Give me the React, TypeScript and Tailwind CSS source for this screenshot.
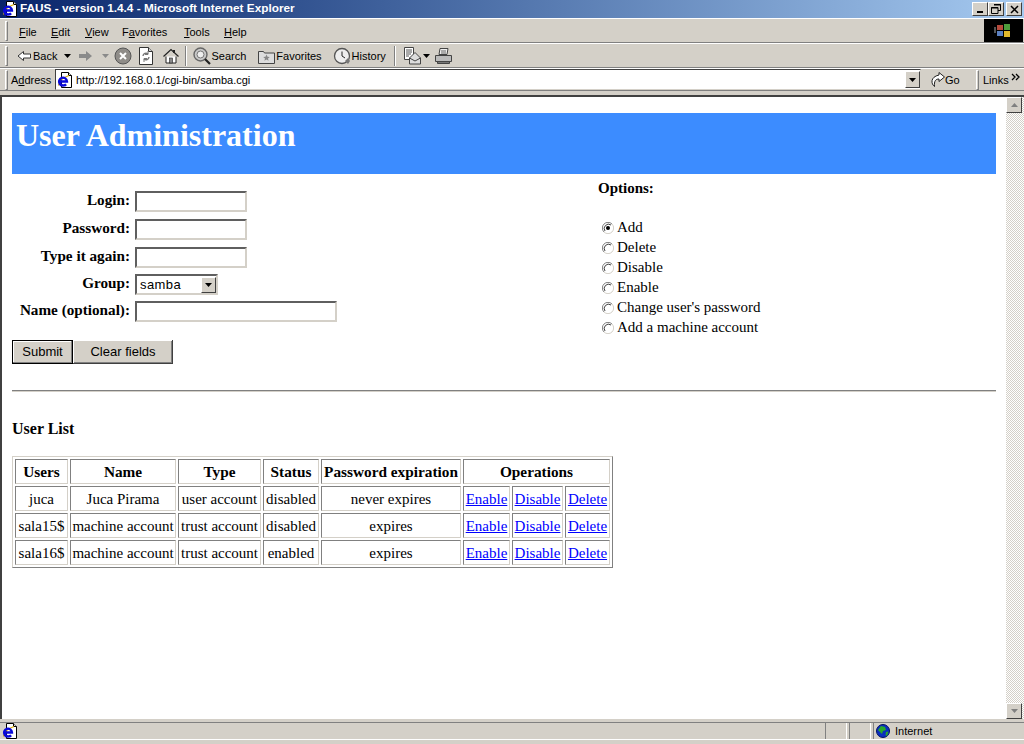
const ui = { fontFamily: '"Liberation Sans", Arial, sans-serif' }

function Gripper() {
  return <span className="mr-[6px] h-[20px] w-[3px] shrink-0 border-t border-l border-t-white border-l-white border-b border-r border-b-[#808080] border-r-[#808080]" />
}

function Divider() {
  return <span className="mx-[3px] block h-[20px] w-[2px] shrink-0 border-l border-r border-l-[#808080] border-r-white" />
}

function IeIcon() {
  return (
    <svg width="16" height="16" viewBox="0 0 16 16" className="shrink-0">
      <path d="M4.500 .5h7l3 3v12h-10z" fill="#fff" stroke="#000" />
      <path d="M11.500 .5v3h3" fill="#ddd" stroke="#000" />
      <path d="M1.500 13.500C2 9 6 5.500 12 3.500" fill="none" stroke="#d9a800" strokeWidth="1.300" />
      <path d="M2.500 9.500h7.500a4 4 0 1 0-1 2.800M2.500 9.500a4 4 0 0 0 6.500 3" fill="none" stroke="#0808d8" strokeWidth="2.300" />
    </svg>
  )
}

function TinyArrow({ color = "#000" }: { color?: string }) {
  return (
    <svg width="7" height="4" viewBox="0 0 7 4" className="block shrink-0">
      <path d="M0 0h7L3.500 4z" fill={color} />
    </svg>
  )
}

function BackIcon() {
  return (
    <svg width="16" height="14" viewBox="0 0 16 14" className="block">
      <path d="M7.500 2.500 2 7l5.500 4.500V9h7V5h-7z" fill="#fff" stroke="#333" />
    </svg>
  )
}

function ForwardIcon() {
  return (
    <svg width="16" height="14" viewBox="0 0 16 14" className="block">
      <path d="M8 2l6 5-6 5V9H1V5h7z" fill="#8a8a8a" />
    </svg>
  )
}

function StopIcon() {
  return (
    <svg width="18" height="18" viewBox="0 0 18 18" className="block">
      <circle cx="9" cy="9" r="8" fill="#8f8c88" stroke="#555" />
      <path d="M6 6l6 6M12 6l-6 6" stroke="#fff" strokeWidth="2" />
    </svg>
  )
}

function RefreshIcon() {
  return (
    <svg width="14" height="18" viewBox="0 0 14 18" className="block">
      <path d="M.5 .5h9l4 4v13H.5z" fill="#fff" stroke="#333" />
      <path d="M9.500 .5v4h4" fill="#ccc" stroke="#333" />
      <path d="M4 9a3 3 0 0 1 5-2M10 10a3 3 0 0 1-5 2" fill="none" stroke="#777" strokeWidth="1.400" />
      <path d="M9 4v3.500H6M5 15v-3.500h3" fill="none" stroke="#777" />
    </svg>
  )
}

function HomeIcon() {
  return (
    <svg width="16" height="16" viewBox="0 0 16 16" className="block">
      <path d="M3 8.500V15h10V8.500" fill="#fff" stroke="#222" />
      <path d="M.5 8.500 8 1.500l7.500 7" fill="none" stroke="#222" strokeWidth="1.200" />
      <path d="M11 2v3" stroke="#222" strokeWidth="2" />
      <rect x="6.500" y="10" width="3" height="5" fill="#8a8a8a" stroke="#222" strokeWidth=".6" />
    </svg>
  )
}

function SearchIcon() {
  return (
    <svg width="18" height="18" viewBox="0 0 18 18" className="block">
      <circle cx="7.500" cy="7.500" r="6.500" fill="#c9c9c9" stroke="#666" strokeWidth="1.400" />
      <circle cx="7.500" cy="7.500" r="3.500" fill="#eee" stroke="#777" />
      <path d="M12 12l5 5" stroke="#222" strokeWidth="2.200" />
    </svg>
  )
}

function FavoritesIcon() {
  return (
    <svg width="17" height="15" viewBox="0 0 17 15" className="block">
      <path d="M.5 2.500h5l1 1.500h10v10.500H.5z" fill="#ddd" stroke="#444" />
      <path d="M8.500 5.500l1 2.200 2.300.2-1.800 1.500.6 2.300-2.100-1.200-2.100 1.200.6-2.300-1.800-1.500 2.300-.2z" fill="#888" />
    </svg>
  )
}

function HistoryIcon() {
  return (
    <svg width="18" height="18" viewBox="0 0 18 18" className="block">
      <circle cx="9" cy="9" r="7.500" fill="#eee" stroke="#555" strokeWidth="1.300" />
      <path d="M9 4.500V9l3 2" fill="none" stroke="#222" />
      <path d="M12 14l3-3 2 3-2 3z" fill="#777" />
    </svg>
  )
}

function MailIcon() {
  return (
    <svg width="18" height="18" viewBox="0 0 18 18" className="block">
      <path d="M.5 .5h9v12h-9z" fill="#fff" stroke="#444" />
      <path d="M2 3h6M2 5h6M2 7h5M2 9h3" stroke="#555" />
      <path d="M5.500 11 11 5.500l5.500 5.500v6h-11z" fill="#ddd" stroke="#444" />
      <path d="M5.500 11l5.500 3 5.500-3" fill="none" stroke="#444" />
    </svg>
  )
}

function PrintIcon() {
  return (
    <svg width="17" height="16" viewBox="0 0 17 16" className="block">
      <path d="M5 .5h8l-1 6H4z" fill="#eee" stroke="#444" />
      <path d="M.5 7.500h16v6H.5z" fill="#bbb" stroke="#444" />
      <path d="M2.500 13.500h12v2h-12z" fill="#777" stroke="#444" />
      <path d="M6 3h5M6 5h5" stroke="#666" />
    </svg>
  )
}

function GoIcon() {
  return (
    <svg width="15" height="15" viewBox="0 0 15 15" className="block shrink-0">
      <path d="M9 .5l5.500 4.500L9 9.500V7C5.500 7 4 9 4.500 14.500 1 12 0 5 9 3z" fill="#fff" stroke="#222" />
    </svg>
  )
}

function GlobeIcon() {
  return (
    <svg width="14" height="14" viewBox="0 0 14 14" className="shrink-0">
      <circle cx="7" cy="7" r="6.500" fill="#0a2fc0" stroke="#001060" />
      <path d="M5 2l4 1 1 3-3 1-1 3-2-2-2-2zM10 8l2.500-.5L11 12l-1.500-1z" fill="#28a82c" />
    </svg>
  )
}

function WinFlag() {
  return (
    <svg width="20" height="16" viewBox="0 0 20 16">
      <rect x="3" y="2" width="6" height="5" fill="#b54a3c" />
      <rect x="10" y="1" width="6" height="6" fill="#4d9a3c" />
      <rect x="3" y="8" width="6" height="5" fill="#5a7fc0" />
      <rect x="10" y="8" width="6" height="6" fill="#e0b82c" />
      <rect x="0" y="4" width="2" height="6" fill="#555" />
    </svg>
  )
}

function CaptionButton({ children }: { children: React.ReactNode }) {
  return (
    <span className="flex h-[14px] w-[16px] items-center justify-center bg-[#d4d0c8] border-t border-l border-t-white border-l-white border-b border-r border-b-[#404040] border-r-[#404040]">
      {children}
    </span>
  )
}

function TitleBar() {
  return (
    <div className="flex h-[18px] shrink-0 items-center bg-gradient-to-r from-[#0a246a] to-[#a6caf0] pl-[2px] pr-[2px]">
      <IeIcon />
      <span className="ml-[2px] text-[11.800px] font-bold text-white">FAUS - version 1.4.4 - Microsoft Internet Explorer</span>
      <div className="ml-auto flex">
        <CaptionButton>
          <span className="mt-[6px] h-[2px] w-[6px] bg-black" />
        </CaptionButton>
        <CaptionButton>
          <svg width="10" height="10" viewBox="0 0 10 10">
            <path d="M3 .5h6.500v6H7M.5 3.500h6.500v6H.5z" fill="none" stroke="#000" />
            <path d="M3 1h7M0 4h7" stroke="#000" />
          </svg>
        </CaptionButton>
        <span className="ml-[2px]" />
        <CaptionButton>
          <svg width="9" height="9" viewBox="0 0 9 9">
            <path d="M1 1l7 7M8 1 1 8" stroke="#000" strokeWidth="1.500" />
          </svg>
        </CaptionButton>
      </div>
    </div>
  )
}

function MenuBar() {
  return (
    <div className="flex h-[25px] shrink-0 items-center border-t border-t-white border-b border-b-[#808080] pl-[5px] pr-[1px]">
      <Gripper />
      <div className="flex flex-1 pl-[5px] pt-[3px]">
        <span className="w-[32px]"><u>F</u>ile</span>
        <span className="w-[34px]"><u>E</u>dit</span>
        <span className="w-[37px]"><u>V</u>iew</span>
        <span className="w-[62px]">F<u>a</u>vorites</span>
        <span className="w-[40px]"><u>T</u>ools</span>
        <span><u>H</u>elp</span>
      </div>
      <div className="flex h-[23px] w-[39px] items-center justify-center bg-black">
        <WinFlag />
      </div>
    </div>
  )
}

function ToolBar() {
  return (
    <div className="flex h-[25px] shrink-0 items-center border-t border-t-white border-b border-b-[#808080] pl-[5px]">
      <Gripper />
      <div className="flex items-center pt-[1px]">
        <span className="ml-[2px]"><BackIcon /></span>
        <span className="ml-[1px]">Back</span>
        <span className="ml-[7px]"><TinyArrow /></span>
        <span className="ml-[7px]"><ForwardIcon /></span>
        <span className="ml-[8px]"><TinyArrow color="#8a8a8a" /></span>
        <span className="ml-[5px]"><StopIcon /></span>
        <span className="ml-[7px]"><RefreshIcon /></span>
        <span className="ml-[10px]"><HomeIcon /></span>
        <span className="ml-[3px]"><Divider /></span>
        <span className="ml-[3px]"><SearchIcon /></span>
        <span>Search</span>
        <span className="ml-[12px]"><FavoritesIcon /></span>
        <span className="ml-[1px]">Favorites</span>
        <span className="ml-[11px]"><HistoryIcon /></span>
        <span className="ml-[1px]">History</span>
        <span className="ml-[5px]"><Divider /></span>
        <span className="ml-[5px]"><MailIcon /></span>
        <span className="ml-[1px]"><TinyArrow /></span>
        <span className="ml-[5px]"><PrintIcon /></span>
      </div>
    </div>
  )
}

function AddressBar() {
  return (
    <div className="flex h-[23px] shrink-0 items-center border-t border-t-white border-b border-b-[#808080] pl-[5px] pr-[3px]">
      <Gripper />
      <span className="-ml-[3px] w-[44px] shrink-0 pt-[1px]">A<u>d</u>dress</span>
      <div className="flex h-[21px] flex-1 items-center border-t border-l border-t-[#404040] border-l-[#404040] border-b border-r border-b-[#d4d0c8] border-r-[#d4d0c8] bg-white pl-[1px]">
        <IeIcon />
        <span className="ml-[3px] pt-[2px]">http://192.168.0.1/cgi-bin/samba.cgi</span>
        <span className="ml-auto flex h-[17px] w-[15px] items-center justify-center bg-[#d4d0c8] border-t border-l border-t-white border-l-white border-b border-r border-b-[#404040] border-r-[#404040]">
          <TinyArrow />
        </span>
      </div>
      <div className="flex w-[55px] shrink-0 items-center pl-[9px]">
        <GoIcon />
        <span className="pt-[1px]">Go</span>
      </div>
      <Gripper />
      <span className="-ml-[2px] w-[28px] shrink-0 pt-[1px]">Links</span>
      <svg width="10" height="8" viewBox="0 0 10 8" className="-mt-[5px] shrink-0">
        <path d="M1 1l3 3-3 3M5 1l3 3-3 3" fill="none" stroke="#000" strokeWidth="1.300" />
      </svg>
    </div>
  )
}

function Radio({ checked }: { checked?: boolean }) {
  return (
    <svg width="12" height="12" viewBox="0 0 12 12" className="shrink-0">
      <circle cx="6" cy="6" r="5.500" fill="#fff" />
      <path d="M2 10A5.500 5.500 0 0 1 10 2" fill="none" stroke="#808080" />
      <path d="M10 2A5.500 5.500 0 0 1 2 10" fill="none" stroke="#d4d0c8" />
      <path d="M3 9A4.300 4.300 0 0 1 9 3" fill="none" stroke="#404040" />
      {checked && <circle cx="6" cy="6" r="2" fill="#000" />}
    </svg>
  )
}

function TextField({ width }: { width: string }) {
  return (
    <input
      type="text"
      className={`h-[21px] border-2 border-t-[#5f5f5f] border-l-[#5f5f5f] border-b-[#d4d0c8] border-r-[#d4d0c8] bg-white ${width}`}
    />
  )
}

function FormRow({ label, className, children }: { label: string; className: string; children: React.ReactNode }) {
  return (
    <div className={`flex h-[21px] items-center ${className}`}>
      <span className="w-[118px] pb-[2px] text-right text-[15.200px] font-bold">{label}</span>
      <span className="ml-[5px] flex">{children}</span>
    </div>
  )
}

const options = ["Add", "Delete", "Disable", "Enable", "Change user's password", "Add a machine account"]

function UserForm() {
  return (
    <div className="flex">
      <div className="w-[586px] shrink-0 pt-[17px]">
        <FormRow label="Login:" className=""><TextField width="w-[112px]" /></FormRow>
        <FormRow label="Password:" className="mt-[7px]"><TextField width="w-[112px]" /></FormRow>
        <FormRow label="Type it again:" className="mt-[7px]"><TextField width="w-[112px]" /></FormRow>
        <FormRow label="Group:" className="mt-[6px]">
          <div className="flex h-[21px] w-[83px] items-center border-2 border-t-[#5f5f5f] border-l-[#5f5f5f] border-b-[#d4d0c8] border-r-[#d4d0c8] bg-white pl-[3px] pt-[1px] text-[13px] tracking-[0.4px]" style={ui}>
            samba
            <span className="ml-auto flex h-[16px] w-[15px] items-center justify-center bg-[#d4d0c8] border-t border-l border-t-white border-l-white border-b border-r border-b-[#404040] border-r-[#404040]">
              <TinyArrow />
            </span>
          </div>
        </FormRow>
        <FormRow label="Name (optional):" className="mt-[6px]"><TextField width="w-[202px]" /></FormRow>
        <div className="mt-[18px] flex text-[13px]" style={ui}>
          <button type="button" className="h-[24px] w-[61px] border border-black bg-[#d4d0c8] shadow-[inset_-1px_-1px_0_#808080,inset_1px_1px_0_#fff]">Submit</button>
          <button type="button" className="h-[24px] w-[100px] bg-[#d4d0c8] shadow-[inset_-1px_-1px_0_#404040,inset_1px_1px_0_#fff,inset_-2px_-2px_0_#808080]">Clear fields</button>
        </div>
      </div>
      <div className="pt-[3px] text-[15px]">
        <div className="font-bold">Options:</div>
        <div className="mt-[18px] pl-[4px]">
          {options.map((option, i) => (
            <div key={option} className="flex h-[20px] items-center gap-[3px]">
              <Radio checked={i === 0} />
              <span>{option}</span>
            </div>
          ))}
        </div>
      </div>
    </div>
  )
}

const users = [
  ["juca", "Juca Pirama", "user account", "disabled", "never expires"],
  ["sala15$", "machine account", "trust account", "disabled", "expires"],
  ["sala16$", "machine account", "trust account", "enabled", "expires"],
]

const headers = ["Users", "Name", "Type", "Status", "Password expiration"]
const cell = "border border-t-[#808080] border-l-[#808080] border-b-[#d4d0c8] border-r-[#d4d0c8] p-0 text-center leading-[20px] whitespace-nowrap"

function UserTable() {
  return (
    <table className="mt-[18px] w-[601px] table-fixed border-separate border-spacing-[2px] border border-t-[#d4d0c8] border-l-[#d4d0c8] border-b-[#808080] border-r-[#808080] text-[15px]">
      <colgroup>
        <col className="w-[53px]" />
        <col className="w-[106px]" />
        <col className="w-[83px]" />
        <col className="w-[56px]" />
        <col className="w-[140px]" />
        <col className="w-[47px]" />
        <col className="w-[51px]" />
        <col className="w-[45px]" />
      </colgroup>
      <thead>
        <tr className="h-[25px]">
          {headers.map((h) => (
            <th key={h} className={`${cell} text-[15.300px] font-bold`}>{h}</th>
          ))}
          <th colSpan={3} className={`${cell} text-[15.300px] font-bold`}>Operations</th>
        </tr>
      </thead>
      <tbody>
        {users.map((row) => (
          <tr key={row[0]} className="h-[25px]">
            {row.map((value, i) => (
              <td key={i} className={cell}>{value}</td>
            ))}
            {["Enable", "Disable", "Delete"].map((op) => (
              <td key={op} className={cell}>
                <a href="#" className="text-[#0000ff] underline">{op}</a>
              </td>
            ))}
          </tr>
        ))}
      </tbody>
    </table>
  )
}

function ScrollButton({ up }: { up?: boolean }) {
  return (
    <span className="flex h-[16px] w-[16px] shrink-0 items-center justify-center bg-[#d4d0c8] border-t border-l border-t-white border-l-white border-b border-r border-b-[#404040] border-r-[#404040]">
      <svg width="7" height="4" viewBox="0 0 7 4">
        <path d={up ? "M0 4h7L3.500 0z" : "M0 0h7L3.500 4z"} fill="#808080" />
      </svg>
    </span>
  )
}

function StatusBar() {
  return (
    <div className="mb-[4px] mt-[3px] flex h-[18px] shrink-0 items-center border-t border-t-[#808080] border-b border-b-white pl-[2px]">
      <IeIcon />
      <div className="ml-auto flex h-full gap-[2px]">
        <span className="w-[22px] border-l border-r border-l-[#808080] border-r-white" />
        <span className="w-[22px] border-l border-r border-l-[#808080] border-r-white" />
        <span className="flex w-[151px] items-center border-l border-l-[#808080] pl-[2px]">
          <GlobeIcon />
          <span className="ml-[5px]">Internet</span>
        </span>
      </div>
    </div>
  )
}

export default function App() {
  return (
    <div className="flex h-[744px] w-[1024px] flex-col overflow-hidden bg-[#d4d0c8] text-[11px] text-black" style={ui}>
      <TitleBar />
      <MenuBar />
      <ToolBar />
      <AddressBar />
      <div className="mt-[4px] flex min-h-0 flex-1 border-t-2 border-l-2 border-t-[#404040] border-l-[#404040] bg-white">
        <div className="min-w-0 flex-1 pl-[10px] pr-[10px] pt-[16px]" style={{ fontFamily: '"Liberation Serif", "Times New Roman", serif' }}>
          <div className="flex h-[61px] items-start bg-[#3c8cff] pl-[4px] pt-[4px] text-[32px] font-bold leading-[37px] text-white">User Administration</div>
          <UserForm />
          <div className="mt-[26px] h-[2px] border-t border-b border-t-[#808080] border-b-[#d4d0c8]" />
          <div className="mt-[28px] text-[16px] font-bold leading-[18px]">User List</div>
          <UserTable />
        </div>
        <div className="flex w-[18px] shrink-0 flex-col bg-[repeating-conic-gradient(#d4d0c8_0_25%,#fff_0_50%)] bg-[length:2px_2px] pr-[2px]">
          <ScrollButton up />
          <div className="flex-1" />
          <ScrollButton />
        </div>
      </div>
      <StatusBar />
    </div>
  )
}
